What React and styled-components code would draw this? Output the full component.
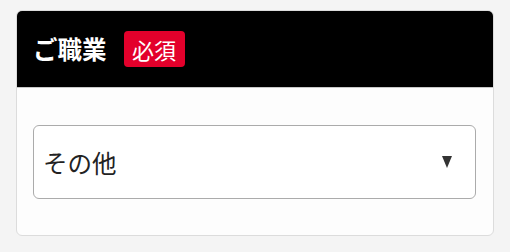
import React from "react";
import styled, { createGlobalStyle } from "styled-components";

const GlobalStyle = createGlobalStyle`
	html, body {
		margin: 0;
		padding: 0;
		background: #f4f4f4;
	}
	body {
		font-family: "Noto Sans CJK JP", "Noto Sans", sans-serif;
	}
`;

const Page = styled.div`
	width: 510px;
	height: 252px;
	padding: 10px 16px 0;
	box-sizing: border-box;
`;

const Card = styled.section`
	border: 1px solid #dcdcdc;
	border-radius: 6px;
	background: #fdfdfd;
	overflow: hidden;
`;

const Header = styled.header`
	height: 76px;
	display: flex;
	align-items: center;
	gap: 17px;
	padding: 0 16px;
	background: #000;
	border-bottom: 1px solid #c8c8c8;
`;

const Title = styled.h2`
	margin: 0;
	color: #fff;
	font-size: 24.5px;
	font-weight: 700;
	line-height: 1;
`;

const Badge = styled.span`
	display: inline-flex;
	align-items: center;
	height: 36px;
	padding: 0 8.5px;
	border-radius: 4px;
	background: #e3002b;
	color: #fff;
	font-size: 22px;
	line-height: 1;
`;

const Body = styled.div`
	padding: 37px 17px 36px 16px;
`;

const Select = styled.div`
	height: 74px;
	box-sizing: border-box;
	display: flex;
	align-items: center;
	justify-content: space-between;
	padding: 0 23px 0 9px;
	border: 1px solid #ababab;
	border-radius: 6px;
	background: #fff;
	color: #222;
	font-size: 24.5px;
`;

const Arrow = styled.span`
	width: 0;
	height: 0;
	border-left: 5.5px solid transparent;
	border-right: 5.5px solid transparent;
	border-top: 12px solid #333;
`;

export default function App() {
	return (
		<Page>
			<GlobalStyle />
			<Card>
				<Header>
					<Title>ご職業</Title>
					<Badge>必須</Badge>
				</Header>
				<Body>
					<Select>
						<span>その他</span>
						<Arrow />
					</Select>
				</Body>
			</Card>
		</Page>
	);
}
